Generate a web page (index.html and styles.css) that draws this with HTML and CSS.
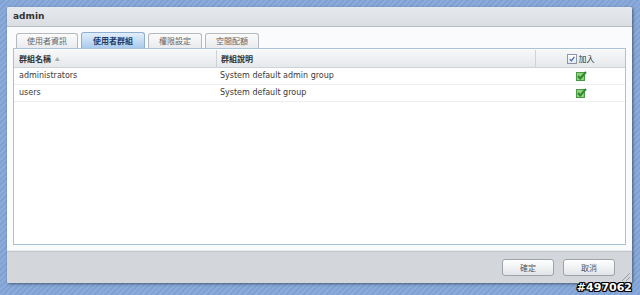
FILE: index.html
```html
<!DOCTYPE html>
<html lang="zh-Hant">

<head>
    <meta charset="UTF-8">
    <title>admin</title>
    <link rel="stylesheet" href="styles.css">
</head>

<body>
    <div class="window">
        <div class="title-bar">admin</div>

        <div class="window-body">
            <div class="tabs">
                <div class="tab">使用者資訊</div>
                <div class="tab active">使用者群組</div>
                <div class="tab">權限設定</div>
                <div class="tab">空間配額</div>
            </div>

            <div class="grid">
                <div class="grid-row grid-head">
                    <div class="cell">群組名稱 <span class="sort">▲</span></div>
                    <div class="cell">群組說明</div>
                    <div class="cell center plain">
                        <span class="head-check">
                            <svg width="8" height="8" viewBox="0 0 8 8">
                                <path d="M1.8 4.2 L3.3 5.9 L6.4 1.8" fill="none" stroke="#3b5fa8" stroke-width="1.1"/>
                            </svg>
                        </span>
                        加入
                    </div>
                </div>
                <div class="grid-row">
                    <div class="cell">administrators</div>
                    <div class="cell">System default admin group</div>
                    <div class="cell center">
                        <svg class="ok" width="11" height="10" viewBox="0 0 11 10">
                            <rect x="0.5" y="1.5" width="8" height="8" fill="#8fd17f" stroke="#4a9a45"/>
                            <path d="M2 5 L4.2 7.4 L10 1" fill="none" stroke="#2f8a2c" stroke-width="2"/>
                        </svg>
                    </div>
                </div>
                <div class="grid-row">
                    <div class="cell">users</div>
                    <div class="cell">System default group</div>
                    <div class="cell center">
                        <svg class="ok" width="11" height="10" viewBox="0 0 11 10">
                            <rect x="0.5" y="1.5" width="8" height="8" fill="#8fd17f" stroke="#4a9a45"/>
                            <path d="M2 5 L4.2 7.4 L10 1" fill="none" stroke="#2f8a2c" stroke-width="2"/>
                        </svg>
                    </div>
                </div>
            </div>
        </div>

        <div class="footer">
            <button class="btn">確定</button>
            <button class="btn">取消</button>
        </div>

        <div class="grip"></div>
    </div>

    <div class="watermark">#497062</div>
</body>

</html>
```

FILE: styles.css
```css
body {
    margin: 0;
    width: 640px;
    height: 295px;
    overflow: hidden;
    font-family: "DejaVu Sans", Verdana, "Noto Sans CJK TC", sans-serif;
    font-size: 8px;
    color: #3a3a3a;
    background-color: #84a6d9;
    background-image: repeating-linear-gradient(135deg, rgba(255, 255, 255, 0.06) 0 2px, rgba(0, 0, 0, 0.03) 2px 4px);
    position: relative;
}

.window {
    position: relative;
    margin: 7px 0 0 7px;
    width: 625px;
    height: 276px;
    display: flex;
    flex-direction: column;
    background: #fafbfc;
    box-shadow: 1px 1px 3px rgba(0, 0, 0, 0.45);
    border-radius: 2px;
}

.title-bar {
    height: 19px;
    line-height: 19px;
    padding-left: 6px;
    font-size: 9px;
    font-weight: bold;
    color: #333;
    background: linear-gradient(#e6e9ed, #dadee3);
    border-bottom: 1px solid #b7bcc2;
    border-radius: 2px 2px 0 0;
}

.window-body {
    flex: 1;
    display: flex;
    flex-direction: column;
    padding: 5px 6px 5px 6px;
    background: #fafbfc;
    border-bottom: 1px solid #e8eaec;
}

.tabs {
    display: flex;
    align-items: flex-end;
    gap: 3px;
    height: 16px;
    padding-left: 3px;
}

.tab {
    height: 14px;
    line-height: 14px;
    padding: 0 10px;
    font-family: "Noto Sans CJK TC", sans-serif;
    font-size: 8px;
    color: #666;
    background: linear-gradient(#fbfbfb, #e9ebee);
    border: 1px solid #b4b9bf;
    border-bottom: none;
    border-radius: 3px 3px 0 0;
}

.tab.active {
    height: 15px;
    line-height: 15px;
    padding: 0 11px;
    font-weight: bold;
    color: #1d3c6a;
    background: linear-gradient(#e2eefa, #a9cbed);
    border-color: #8eaed2;
}

.grid {
    flex: 1;
    background: #fff;
    border: 1px solid #a9c3d6;
}

.grid-row {
    display: grid;
    grid-template-columns: 202px 319px 1fr;
    height: 16px;
    line-height: 16px;
    border-bottom: 1px solid #eceef0;
}

.grid-head {
    height: 17px;
    line-height: 17px;
    background: linear-gradient(#f6f7f8, #e6e9ec);
    border-top: 1px solid #fff;
    border-bottom: 1px solid #cdd3d9;
    font-family: "Noto Sans CJK TC", sans-serif;
    font-weight: bold;
    color: #333;
}

.grid-head .cell + .cell {
    border-left: 1px solid #cdd3d9;
}

.grid-head .plain {
    font-weight: normal;
}

.cell {
    padding-left: 5px;
    white-space: nowrap;
    overflow: hidden;
}

.grid-row .cell:nth-child(2) {
    padding-left: 4px;
}

.center {
    padding-left: 0 !important;
    display: flex;
    align-items: center;
    justify-content: center;
    gap: 2px;
}

.sort {
    font-size: 5px;
    color: #aaa;
    vertical-align: 1px;
    margin-left: 2px;
}

.head-check {
    width: 8px;
    height: 8px;
    display: flex;
    background: linear-gradient(#fff, #e4e8ee);
    border: 1px solid #8a97a8;
}

.ok {
    display: block;
    margin-left: 2px;
}

.footer {
    height: 31px;
    display: flex;
    align-items: center;
    justify-content: flex-end;
    gap: 9px;
    padding-right: 17px;
    background: #d3d6db;
    border-top: 1px solid #c2c6cc;
    border-radius: 0 0 2px 2px;
}

.btn {
    width: 52px;
    height: 17px;
    padding: 0;
    font-family: "Noto Sans CJK TC", sans-serif;
    font-size: 8px;
    color: #555;
    background: linear-gradient(#ffffff, #e2e4e8);
    border: 1px solid #9ea3aa;
    border-radius: 3px;
}

.grip {
    position: absolute;
    right: 2px;
    bottom: 2px;
    width: 8px;
    height: 8px;
    background: linear-gradient(135deg, transparent 0 45%, #9aa0a8 45% 52%, transparent 52% 70%, #9aa0a8 70% 77%, transparent 77%);
}

.watermark {
    position: absolute;
    right: 8px;
    bottom: 1px;
    font-family: "DejaVu Sans", sans-serif;
    font-size: 11px;
    font-weight: bold;
    color: #fff;
    text-shadow: 1px 0 0 #000, -1px 0 0 #000, 0 1px 0 #000, 0 -1px 0 #000, 1px 1px 0 #000, -1px -1px 0 #000, 1px -1px 0 #000, -1px 1px 0 #000;
}
```
